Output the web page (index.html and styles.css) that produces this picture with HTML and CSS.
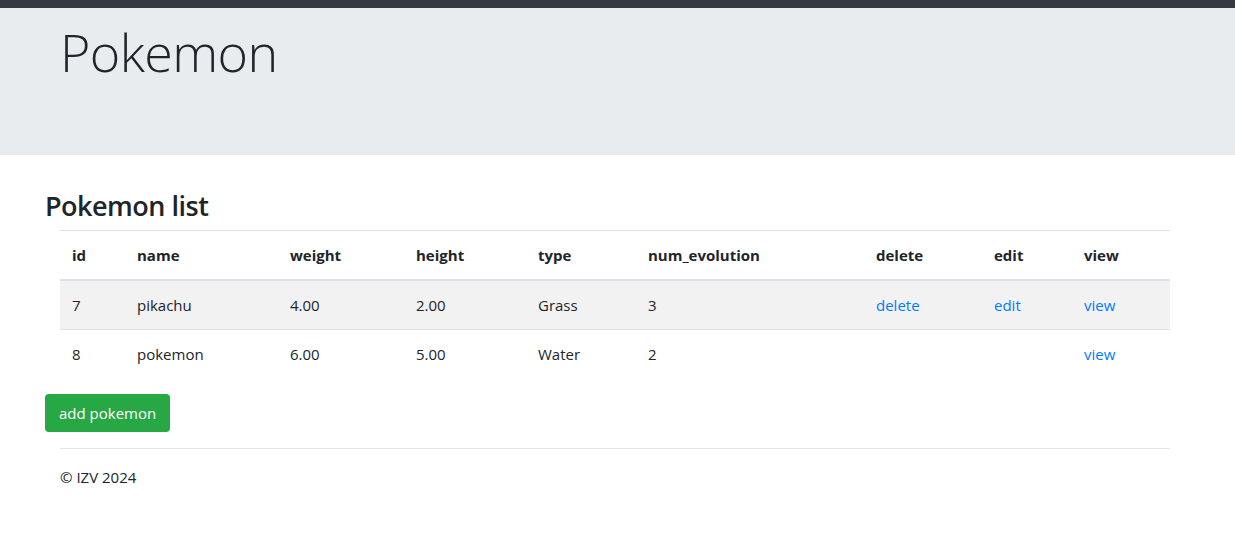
FILE: index.html
```html
<!DOCTYPE html>
<html lang="en">
<head>
<meta charset="utf-8">
<title>Pokemon</title>
<link rel="stylesheet" href="styles.css">
</head>
<body>
<div class="topbar"></div>
<header class="jumbotron">
  <div class="container">
    <h1 class="display">Pokemon</h1>
  </div>
</header>
<main class="container">
  <h2 class="list-title">Pokemon list</h2>
  <table class="table">
    <colgroup>
      <col class="c-id"><col class="c-name"><col class="c-weight"><col class="c-height"><col class="c-type"><col class="c-evo"><col class="c-delete"><col class="c-edit"><col class="c-view">
    </colgroup>
    <thead>
      <tr><th>id</th><th>name</th><th>weight</th><th>height</th><th>type</th><th>num_evolution</th><th>delete</th><th>edit</th><th>view</th></tr>
    </thead>
    <tbody>
      <tr class="striped"><td>7</td><td>pikachu</td><td>4.00</td><td>2.00</td><td>Grass</td><td>3</td><td><a href="#">delete</a></td><td><a href="#">edit</a></td><td><a href="#">view</a></td></tr>
      <tr><td>8</td><td>pokemon</td><td>6.00</td><td>5.00</td><td>Water</td><td>2</td><td></td><td></td><td><a href="#">view</a></td></tr>
    </tbody>
  </table>
  <a href="#" class="btn-success">add pokemon</a>
  <footer class="footer">
    <p>© IZV 2024</p>
  </footer>
</main>
</body>
</html>
```
FILE: styles.css
```css
* { box-sizing: border-box; }
html, body { margin: 0; padding: 0; }
body {
  font-family: "Open Sans", "Noto Sans", "Liberation Sans", sans-serif;
  font-size: 16px;
  line-height: 1.5;
  color: #212529;
  background: #fff;
}
.topbar { height: 8px; background: #343a40; }
.jumbotron {
  background: #e9ecef;
  height: 147px;
}
.container {
  width: 1140px;
  margin-left: 45px;
  padding: 0 15px;
}
.display {
  margin: 0;
  font-size: 52px;
  font-weight: 300;
  line-height: 1.2;
  padding-top: 13px;
  letter-spacing: -0.6px;
}
.list-title {
  margin: 35px 0 3px -15px;
  font-size: 27px;
  font-weight: 600;
  line-height: 1.2;
  letter-spacing: -0.5px;
  height: 37px;
}
.table {
  width: 1110px;
  table-layout: fixed;
  border-collapse: collapse;
  margin-bottom: 16px;
  font-size: 15px;
}
.c-id { width: 65px; }
.c-name { width: 153px; }
.c-weight { width: 126px; }
.c-height { width: 122px; }
.c-type { width: 110px; }
.c-evo { width: 228px; }
.c-delete { width: 118px; }
.c-edit { width: 90px; }
.c-view { width: 98px; }
.table th, .table td {
  padding: 12px;
  text-align: left;
  vertical-align: top;
  border-top: 1px solid #dee2e6;
  line-height: 24px;
}
.table th { font-weight: 700; }
.table thead th { border-bottom: 2px solid #dee2e6; }
.table tbody tr:first-child td { border-top: 0; }
.striped { background: #f2f2f2; }
.table a { color: #007bff; text-decoration: none; }
.btn-success {
  display: inline-block;
  margin-left: -15px;
  background: #28a745;
  color: #fff;
  text-decoration: none;
  font-size: 15px;
  line-height: 24px;
  padding: 7px 14px;
  border-radius: 4px;
}
.footer {
  margin-top: 16px;
  border-top: 1px solid #e5e5e5;
  padding-top: 16px;
}
.footer p { margin: 0; font-size: 15px; line-height: 24px; }
```
